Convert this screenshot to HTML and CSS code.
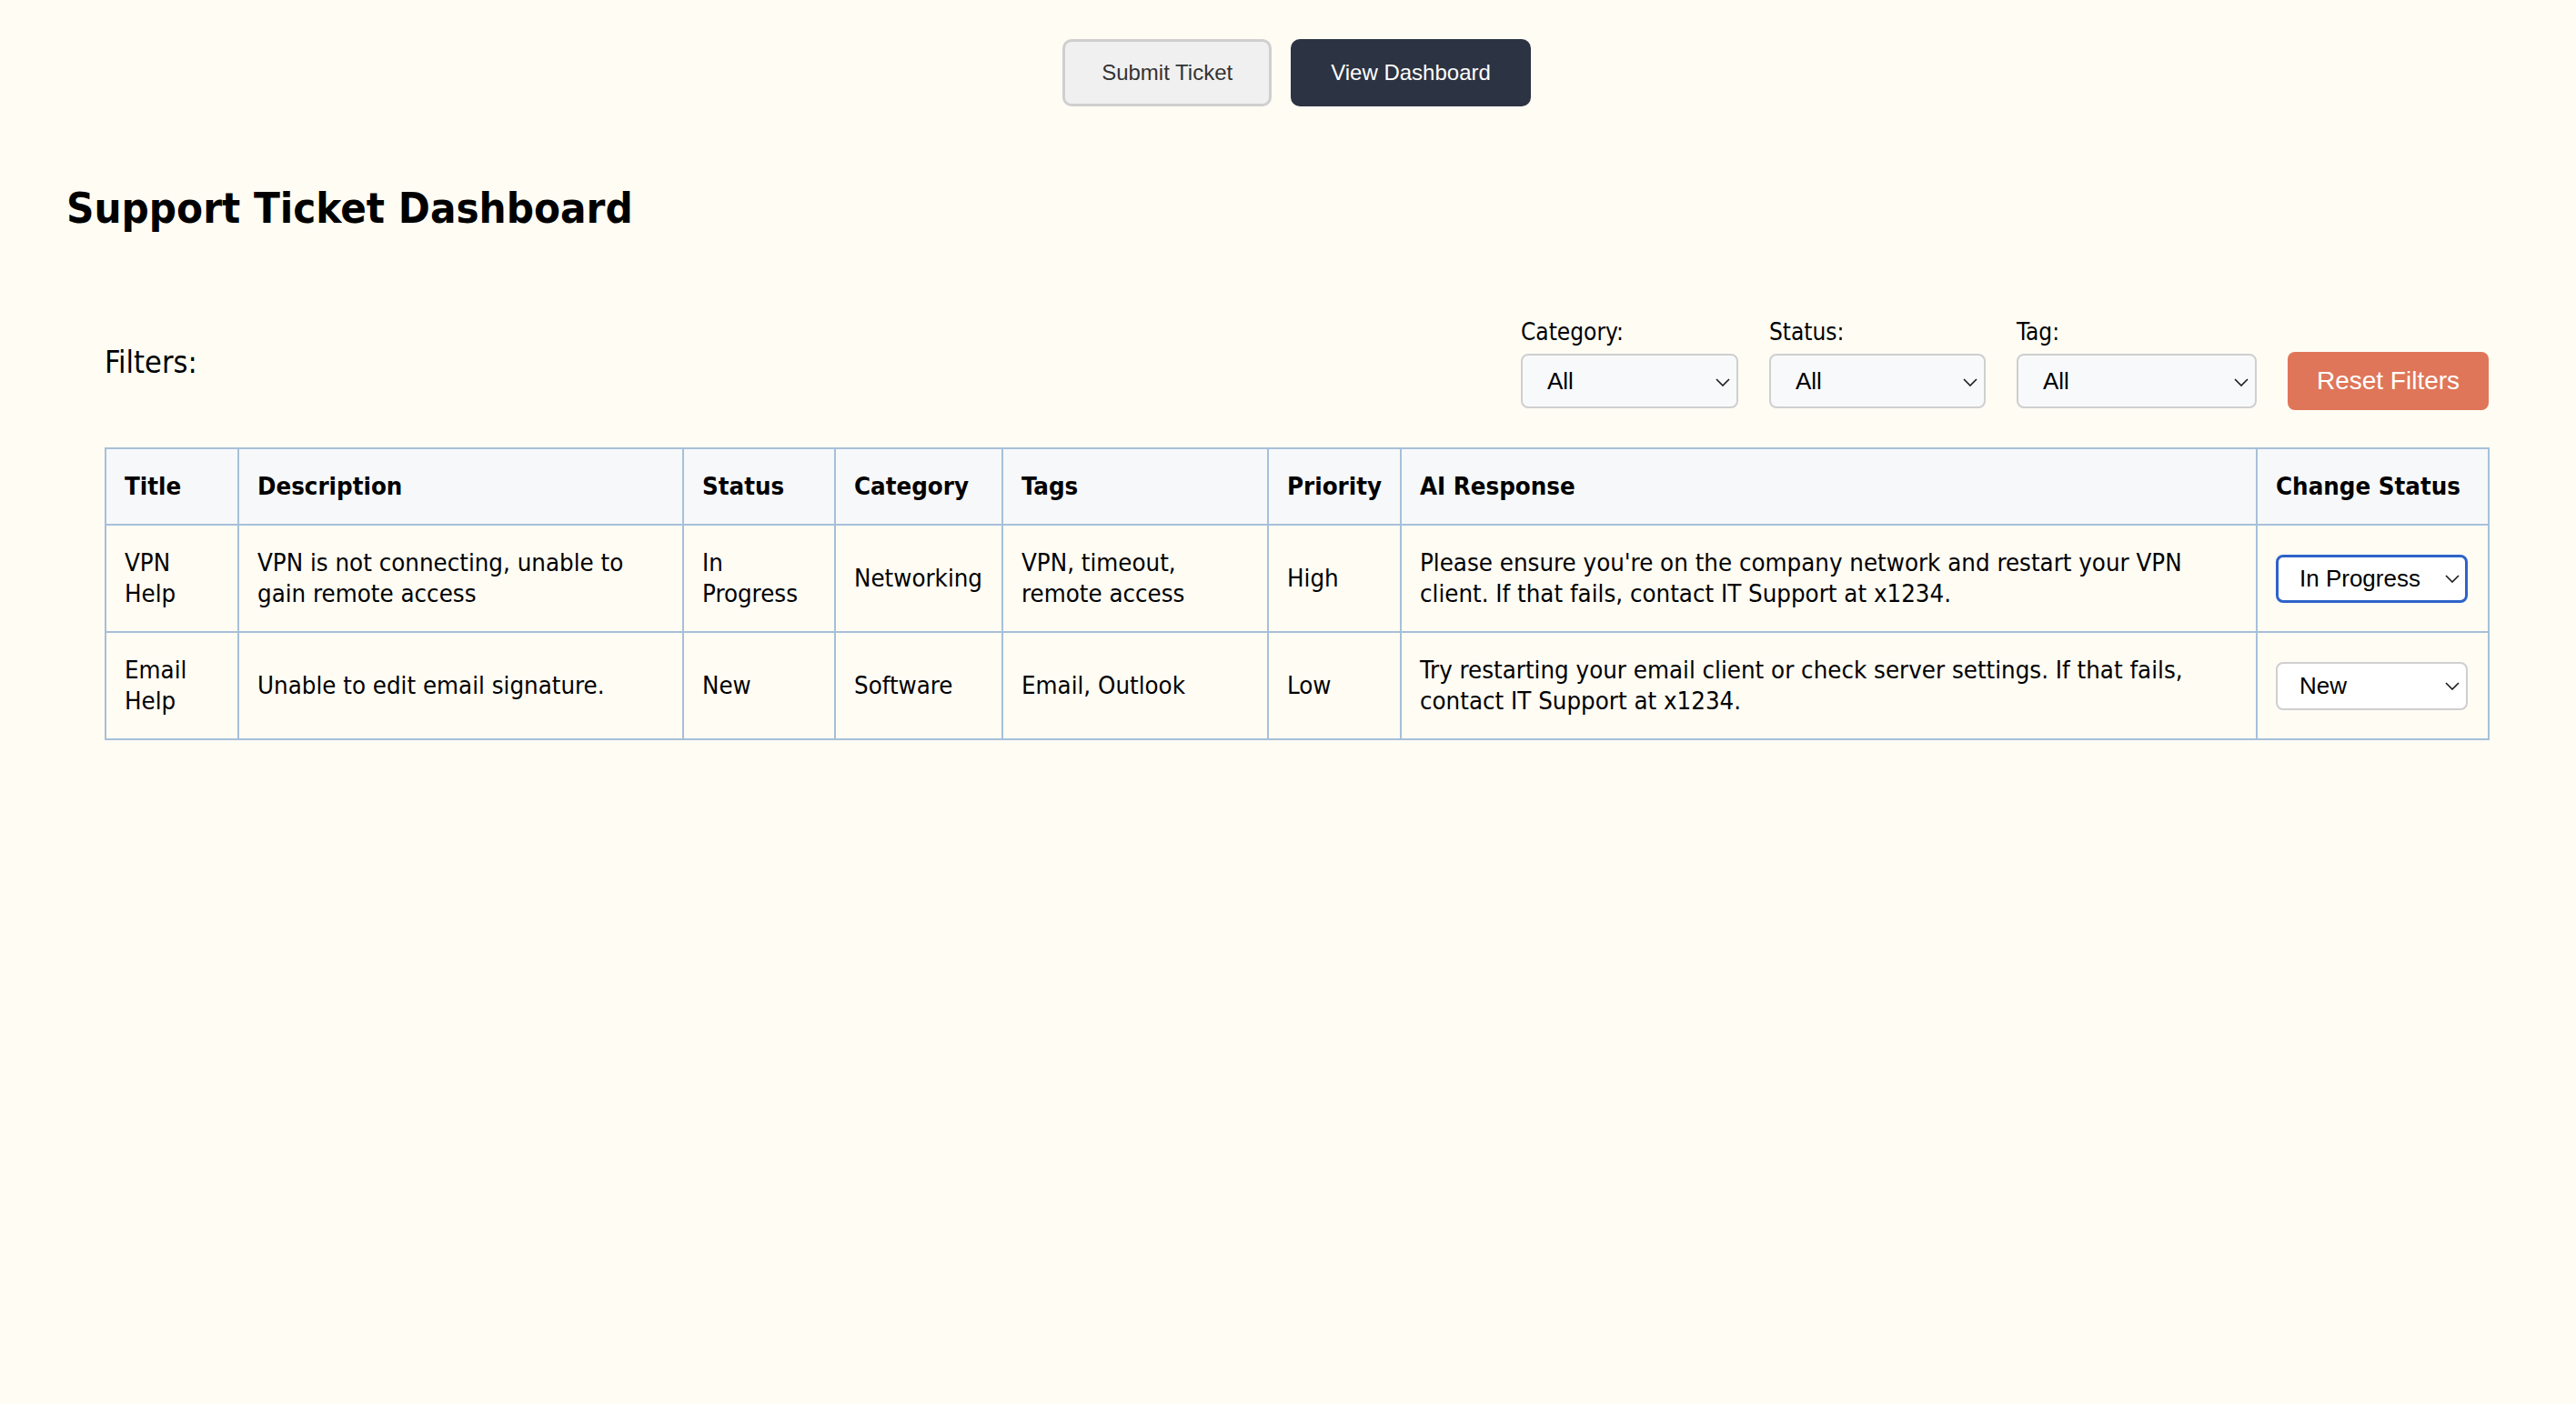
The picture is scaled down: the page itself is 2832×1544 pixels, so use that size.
FILE: index.html
```html
<!DOCTYPE html>
<html lang="en">
<head>
<meta charset="utf-8">
<title>Support Ticket Dashboard</title>
<link rel="stylesheet" href="styles.css">
</head>
<body>
<div class="page">
  <nav class="topnav">
    <button class="btn btn-light">Submit Ticket</button>
    <button class="btn btn-dark">View Dashboard</button>
  </nav>

  <h1 class="title">Support Ticket Dashboard</h1>

  <section class="dashboard">
    <div class="filters">
      <h2 class="filters-label">Filters:</h2>
      <div class="filter-controls">
        <label class="filter">
          <span class="filter-name">Category:</span>
          <span class="select-wrap">
            <select class="select select-filter w-cat">
              <option>All</option><option>Networking</option><option>Software</option><option>Hardware</option>
            </select>
            <svg class="chev" viewBox="0 0 16 9" width="16" height="9"><path d="M1 1 L8 8 L15 1"/></svg>
          </span>
        </label>
        <label class="filter">
          <span class="filter-name">Status:</span>
          <span class="select-wrap">
            <select class="select select-filter w-status">
              <option>All</option><option>New</option><option>In Progress</option><option>Resolved</option>
            </select>
            <svg class="chev" viewBox="0 0 16 9" width="16" height="9"><path d="M1 1 L8 8 L15 1"/></svg>
          </span>
        </label>
        <label class="filter">
          <span class="filter-name">Tag:</span>
          <span class="select-wrap">
            <select class="select select-filter w-tag">
              <option>All</option><option>VPN</option><option>timeout</option><option>remote access</option><option>Email</option><option>Outlook</option>
            </select>
            <svg class="chev" viewBox="0 0 16 9" width="16" height="9"><path d="M1 1 L8 8 L15 1"/></svg>
          </span>
        </label>
        <button class="btn-reset">Reset Filters</button>
      </div>
    </div>

    <table class="tickets">
      <colgroup>
        <col class="c-title"><col class="c-desc"><col class="c-status"><col class="c-cat"><col class="c-tags"><col class="c-prio"><col class="c-ai"><col class="c-change">
      </colgroup>
      <thead>
        <tr>
          <th>Title</th><th>Description</th><th>Status</th><th>Category</th><th>Tags</th><th>Priority</th><th>AI Response</th><th>Change Status</th>
        </tr>
      </thead>
      <tbody>
        <tr>
          <td>VPN Help</td>
          <td>VPN is not connecting, unable to gain remote access</td>
          <td>In Progress</td>
          <td>Networking</td>
          <td>VPN, timeout, remote access</td>
          <td>High</td>
          <td>Please ensure you're on the company network and restart your VPN client. If that fails, contact IT Support at x1234.</td>
          <td>
            <span class="select-wrap">
              <select class="select select-status is-focused">
                <option>New</option><option selected>In Progress</option><option>Resolved</option>
              </select>
              <svg class="chev" viewBox="0 0 16 9" width="16" height="9"><path d="M1 1 L8 8 L15 1"/></svg>
            </span>
          </td>
        </tr>
        <tr>
          <td>Email Help</td>
          <td>Unable to edit email signature.</td>
          <td>New</td>
          <td>Software</td>
          <td>Email, Outlook</td>
          <td>Low</td>
          <td>Try restarting your email client or check server settings. If that fails, contact IT Support at x1234.</td>
          <td>
            <span class="select-wrap">
              <select class="select select-status">
                <option selected>New</option><option>In Progress</option><option>Resolved</option>
              </select>
              <svg class="chev" viewBox="0 0 16 9" width="16" height="9"><path d="M1 1 L8 8 L15 1"/></svg>
            </span>
          </td>
        </tr>
      </tbody>
    </table>
  </section>
</div>
</body>
</html>
```

FILE: styles.css
```css
html, body {
  margin: 0;
  padding: 0;
  background: #fffcf4;
}

body {
  font-family: "DejaVu Sans Condensed", "DejaVu Sans", sans-serif;
  color: #000;
}

.page {
  padding: 43px 96px 0 73px;
}

/* top navigation */
.topnav {
  margin-left: 42px;
  display: flex;
  justify-content: center;
  gap: 21px;
}

.btn {
  font-family: "Liberation Sans", Arial, sans-serif;
  font-size: 24px;
  height: 74px;
  padding: 0 40px;
  border-radius: 10px;
  border: 3px solid transparent;
  cursor: pointer;
}

.btn-light {
  background: #f0f0f1;
  border-color: #cfcfcf;
  color: #333;
}

.btn-dark {
  background: #2c3342;
  border-color: #2c3342;
  color: #fff;
  padding: 0 41px;
}

/* heading */
.title {
  margin: 84px 0 0 0;
  font-size: 47px;
  font-weight: bold;
  line-height: 56px;
}

/* dashboard */
.dashboard {
  margin-left: 42px;
}

.filters {
  margin-top: 93px;
  display: flex;
  justify-content: space-between;
  align-items: center;
}

.filters-label {
  margin: 0 0 6px 0;
  font-size: 34px;
  font-weight: normal;
  line-height: normal;
}

.filter-controls {
  display: flex;
  align-items: flex-end;
  gap: 34px;
}

.filter {
  display: flex;
  flex-direction: column;
  gap: 9px;
}

.filter-name {
  font-size: 26px;
  line-height: normal;
}

.select-wrap {
  position: relative;
  display: inline-block;
}

.select {
  appearance: none;
  -webkit-appearance: none;
  font-family: "Liberation Sans", Arial, sans-serif;
  font-size: 26px;
  color: #000;
  border-radius: 8px;
  outline: none;
  margin: 0;
  display: block;
}

.chev {
  position: absolute;
  right: 9px;
  top: 50%;
  margin-top: -4px;
  fill: none;
  stroke: #1a1a1a;
  stroke-width: 1.6;
  pointer-events: none;
}

.select-filter {
  height: 60px;
  padding: 0 30px 0 27px;
  background: #f8f9fa;
  border: 2px solid #cfcfcf;
  margin-bottom: 2px;
}

.w-cat { width: 239px; }
.w-status { width: 238px; }
.w-tag { width: 264px; }

.btn-reset {
  font-family: "Liberation Sans", Arial, sans-serif;
  font-size: 28px;
  color: #fff;
  background: #df7659;
  border: none;
  border-radius: 8px;
  height: 64px;
  width: 221px;
  padding: 0;
  cursor: pointer;
}

/* table */
.tickets {
  margin-top: 41px;
  width: 2620px;
  table-layout: fixed;
  border-collapse: collapse;
  font-size: 27.4px;
  line-height: 34px;
}

.c-title { width: 146px; }
.c-desc { width: 489px; }
.c-status { width: 167px; }
.c-cat { width: 184px; }
.c-tags { width: 292px; }
.c-prio { width: 146px; }
.c-ai { width: 941px; }
.c-change { width: 255px; }

.tickets th,
.tickets td {
  border: 2px solid #a6c0d9;
  padding: 24px 20px;
  text-align: left;
  vertical-align: middle;
}

.tickets th {
  background: #f7f8f9;
  font-weight: bold;
}

.select-status {
  width: 211px;
  height: 53px;
  padding: 0 30px 0 24px;
  background: #fff;
  border: 2px solid #cfcfcf;
}

.select-status.is-focused {
  border: 3px solid #2e63c9;
  padding-left: 23px;
}
```
